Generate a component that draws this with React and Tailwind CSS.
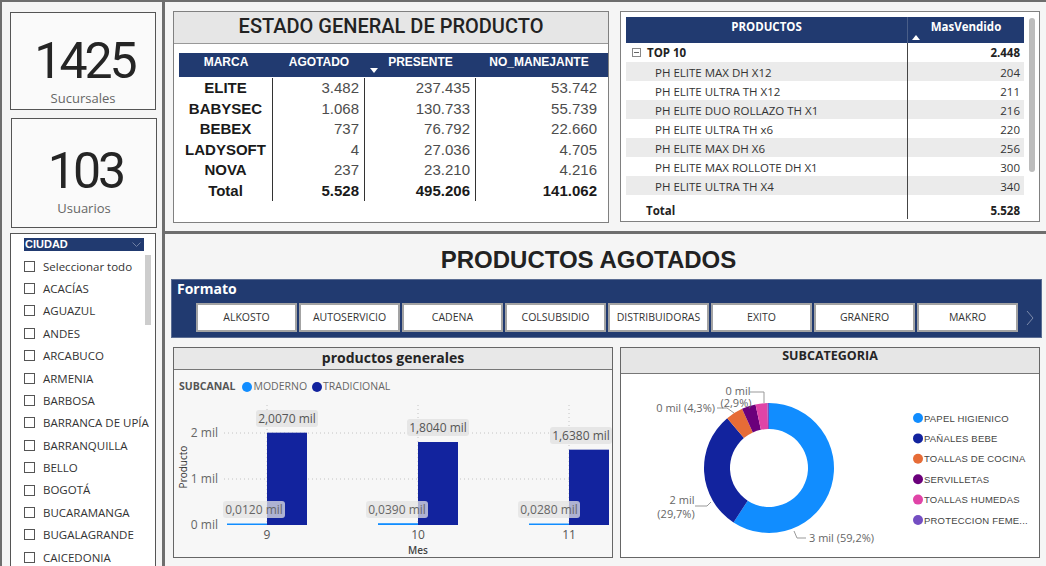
import React from "react";

const marcas = [
  ["ELITE", "3.482", "237.435", "53.742"],
  ["BABYSEC", "1.068", "130.733", "55.739"],
  ["BEBEX", "737", "76.792", "22.660"],
  ["LADYSOFT", "4", "27.036", "4.705"],
  ["NOVA", "237", "23.210", "4.216"],
];

const productos = [
  ["PH ELITE MAX DH X12", "204"],
  ["PH ELITE ULTRA TH X12", "211"],
  ["PH ELITE DUO ROLLAZO TH X1", "216"],
  ["PH ELITE ULTRA TH x6", "220"],
  ["PH ELITE MAX DH X6", "256"],
  ["PH ELITE MAX ROLLOTE DH X1", "300"],
  ["PH ELITE ULTRA TH X4", "340"],
  ["PH ELITE MAX DH X4", "347"],
];

const ciudades = [
  "Seleccionar todo",
  "ACACÍAS",
  "AGUAZUL",
  "ANDES",
  "ARCABUCO",
  "ARMENIA",
  "BARBOSA",
  "BARRANCA DE UPÍA",
  "BARRANQUILLA",
  "BELLO",
  "BOGOTÁ",
  "BUCARAMANGA",
  "BUGALAGRANDE",
  "CAICEDONIA",
];

const formatos = ["ALKOSTO", "AUTOSERVICIO", "CADENA", "COLSUBSIDIO", "DISTRIBUIDORAS", "EXITO", "GRANERO", "MAKRO"];

const subcategorias = [
  { name: "PAPEL HIGIENICO", color: "#118dff", from: 0, to: 213.1 },
  { name: "PAÑALES BEBE", color: "#12239e", from: 213.1, to: 320 },
  { name: "TOALLAS DE COCINA", color: "#e66c37", from: 320, to: 335.5 },
  { name: "SERVILLETAS", color: "#6b007b", from: 335.5, to: 348 },
  { name: "TOALLAS HUMEDAS", color: "#e044a7", from: 348, to: 358.6 },
  { name: "PROTECCION FEME...", color: "#744ec2", from: 358.6, to: 360 },
];

// donut slice path, angles clockwise from 12 o'clock
const arc = (cx, cy, r0, r1, a0, a1) => {
  const p = (r, a) => [cx + r * Math.sin((a * Math.PI) / 180), cy - r * Math.cos((a * Math.PI) / 180)];
  const large = a1 - a0 > 180 ? 1 : 0;
  const [x0, y0] = p(r1, a0);
  const [x1, y1] = p(r1, a1);
  const [x2, y2] = p(r0, a1);
  const [x3, y3] = p(r0, a0);
  return `M${x0} ${y0} A${r1} ${r1} 0 ${large} 1 ${x1} ${y1} L${x2} ${y2} A${r0} ${r0} 0 ${large} 0 ${x3} ${y3}Z`;
};

const KpiCard = ({ value, label, className }) => (
  <div className={`w-[146px] border border-[#555] bg-[#fafafa] flex flex-col items-center ${className}`}>
    <div className="font-['Roboto',sans-serif] text-[50px] leading-none tracking-[-3px] text-[#252525] mr-[-3px]">{value}</div>
    <div className="mt-[4px] text-[13px] leading-[16px] text-[#666]">{label}</div>
  </div>
);

const CiudadSlicer = () => (
  <div className="mt-[5px] w-[146px] flex-1 border border-b-0 border-[#555] bg-white relative overflow-hidden pl-[13px] pt-[4px]">
    <div className="w-[120px] h-[13px] bg-[#213a70] flex items-center justify-between pl-[1px] pr-[3px]">
      <span className="font-['Liberation_Sans',Arial,sans-serif] font-bold text-[11px] leading-[13px] text-white">CIUDAD</span>
      <svg width="9" height="6" viewBox="0 0 9 6">
        <path d="M0.5 0.5 L4.5 4.5 L8.5 0.5" fill="none" stroke="#6f7fa3" strokeWidth="1" />
      </svg>
    </div>
    <div className="mt-[4px]">
      {ciudades.map((c) => (
        <div key={c} className="h-[22.4px] flex items-center gap-[8px]">
          <div className="w-[11px] h-[11px] border border-[#555] bg-white shrink-0" />
          <span className="text-[11.5px] text-[#333] whitespace-nowrap">{c}</span>
        </div>
      ))}
    </div>
    <div className="absolute left-[134px] top-[21px] w-[6px] h-[70px] bg-[#cdcdcd]" />
  </div>
);

const EstadoCard = () => (
  <div className="w-[436px] h-[212px] border border-[#808080] bg-white flex flex-col">
    <div className="h-[32px] bg-[#e6e6e6] border-b border-[#999] flex items-center justify-center pb-[4px] font-['Roboto',sans-serif] font-medium text-[20px] text-[#222]">
      ESTADO GENERAL DE PRODUCTO
    </div>
    <div className="mt-[9px] ml-[5px] font-['Liberation_Sans',Arial,sans-serif]">
      <div className="flex h-[24px] bg-[#213a70] text-white font-bold text-[12px] leading-[14px]">
        <div className="w-[94px] text-center pt-[2px]">MARCA</div>
        <div className="w-[92px] text-center pt-[2px]">AGOTADO</div>
        <div className="w-[111px] text-center pt-[2px] relative">
          PRESENTE
          <svg className="absolute left-[5px] bottom-[4px]" width="8" height="5" viewBox="0 0 8 5">
            <path d="M0 0 L8 0 L4 5Z" fill="white" />
          </svg>
        </div>
        <div className="w-[126px] text-center pt-[2px]">NO_MANEJANTE</div>
      </div>
      <div className="flex mt-px text-[15px] leading-[20.5px]">
        <div className="w-[94px] border-r border-[#333] text-center font-bold text-[#1a1a1a]">
          {marcas.map((m) => (
            <div key={m[0]}>{m[0]}</div>
          ))}
          <div>Total</div>
        </div>
        {[1, 2, 3].map((i) => (
          <div
            key={i}
            className={`text-right pr-[5px] text-[#4d4d4d] ${i === 1 ? "w-[92px] border-r border-[#333]" : i === 2 ? "w-[111px] border-r border-[#333]" : "w-[126px]"}`}
          >
            {marcas.map((m) => (
              <div key={m[0]}>{m[i]}</div>
            ))}
            <div className="font-bold text-[#1a1a1a]">{i === 1 ? "5.528" : i === 2 ? "495.206" : "141.062"}</div>
          </div>
        ))}
      </div>
    </div>
  </div>
);

const ProductosCard = () => (
  <div className="w-[420px] h-[211px] border border-[#808080] bg-white relative pl-[5px] pt-[5px]">
    <div className="w-[398px] text-[11.5px]">
      <div className="flex h-[26px] bg-[#213a70] text-white font-bold leading-[14px]">
        <div className="w-[282px] text-center pt-[3px] border-r border-[#4a5e88]">PRODUCTOS</div>
        <div className="w-[116px] text-center pt-[3px] relative">
          MasVendido
          <svg className="absolute left-[4px] bottom-[3px]" width="8" height="5" viewBox="0 0 8 5">
            <path d="M0 5 L8 5 L4 0Z" fill="white" />
          </svg>
        </div>
      </div>
      <div className="h-[157px] overflow-hidden">
        <div className="flex h-[19px] items-center">
          <div className="w-[282px] h-full border-r border-[#444] flex items-center pl-[6px] font-bold text-[#222]">
            <div className="w-[9px] h-[9px] border border-[#888] flex items-center justify-center mr-[6px]">
              <div className="w-[5px] h-px bg-[#666]" />
            </div>
            TOP 10
          </div>
          <div className="w-[116px] text-right pr-[4px] font-bold text-[#222]">2.448</div>
        </div>
        {productos.map((p, i) => (
          <div key={p[0]} className={`flex h-[19px] items-center ${i % 2 === 0 ? "bg-[#ebebeb]" : "bg-white"}`}>
            <div className="w-[282px] h-full border-r border-[#444] flex items-center pl-[29px] text-[#333] leading-[12px] pt-[2px]">{p[0]}</div>
            <div className="w-[116px] text-right pr-[4px] text-[#333] leading-[12px] pt-[2px]">{p[1]}</div>
          </div>
        ))}
      </div>
      <div className="flex h-[19px] items-center font-bold text-[#222]">
        <div className="w-[282px] h-full border-r border-[#444] pl-[20px] flex items-center pt-[2px]">Total</div>
        <div className="w-[116px] text-right pr-[4px] pt-[2px]">5.528</div>
      </div>
    </div>
    <div className="absolute left-[408px] top-[6px] w-[6px] h-[154px] rounded-full bg-[#bcbcbc]" />
  </div>
);

const FormatoSlicer = () => (
  <div className="ml-[6px] w-[871px] h-[59px] bg-[#213a70] border border-[#5b6d93]">
    <div className="pl-[5px] text-white font-bold text-[14px] leading-[18px]">Formato</div>
    <div className="flex items-center mt-[5px] ml-[24px]">
      <div className="flex gap-[2px]">
        {formatos.map((f) => (
          <div
            key={f}
            className="w-[101px] h-[29px] bg-white border-2 border-[#a3a3a3] flex items-center justify-center pt-px text-[10.5px] text-[#333]"
          >
            {f}
          </div>
        ))}
      </div>
      <svg className="ml-[8px]" width="8" height="16" viewBox="0 0 8 16">
        <path d="M1 1 L7 8 L1 15" fill="none" stroke="#7d8bab" strokeWidth="1" />
      </svg>
    </div>
  </div>
);

const BarChart = () => {
  const grupos = [
    { mes: "9", x: 93, mod: 12, tra: 2007, lt: "2,0070 mil", lm: "0,0120 mil", ltx: 113, lty: 25, lmx: 80 },
    { mes: "10", x: 244, mod: 39, tra: 1804, lt: "1,8040 mil", lm: "0,0390 mil", ltx: 264, lty: 34, lmx: 223 },
    { mes: "11", x: 395, mod: 28, tra: 1638, lt: "1,6380 mil", lm: "0,0280 mil", ltx: 407, lty: 42, lmx: 375 },
  ];
  const base = 131;
  const k = 0.046;
  return (
    <div className="w-[440px] h-[211px] border border-[#666] bg-[#f7f7f7] flex flex-col">
      <div className="h-[22px] bg-[#e8e8e8] border-b border-[#777] text-center font-bold text-[14px] leading-[20px] text-[#252525]">
        productos generales
      </div>
      <div className="mt-[10px] h-[14px] flex items-center pl-[5px] text-[10.5px] text-[#666]">
        <span className="font-bold text-[#555] mr-[7px]">SUBCANAL</span>
        <span className="w-[10px] h-[10px] rounded-full bg-[#118dff] mr-px" />
        <span className="mr-[5px]">MODERNO</span>
        <span className="w-[10px] h-[10px] rounded-full bg-[#12239e] mr-px" />
        <span>TRADICIONAL</span>
      </div>
      <svg width="438" height="163" viewBox="0 0 438 163" fontFamily="Open Sans, sans-serif">
        {[39, 85].map((y) => (
          <line key={y} x1="50" x2="438" y1={y} y2={y} stroke="#c4c4c4" strokeDasharray="1 3" />
        ))}
        {grupos.map((g) => (
          <line key={g.mes} x1={g.x} x2={g.x} y1="11" y2={base} stroke="#c4c4c4" strokeDasharray="1 3" />
        ))}
        {[
          ["2 mil", 39],
          ["1 mil", 85],
          ["0 mil", 131],
        ].map(([t, y]) => (
          <text key={t} x="44" y={y + 4} textAnchor="end" fontSize="12" fill="#666">
            {t}
          </text>
        ))}
        <text transform="translate(13 73) rotate(-90)" textAnchor="middle" fontSize="10" fill="#333">
          Producto
        </text>
        {grupos.map((g) => (
          <g key={g.mes}>
            <rect x={g.x - 40} y={base - Math.max(g.mod * k, 1.5)} width="40" height={Math.max(g.mod * k, 1.5)} fill="#118dff" />
            <rect x={g.x} y={base - g.tra * k} width="40" height={g.tra * k} fill="#12239e" />
            <rect x={g.ltx - 31} y={g.lty - 9} width="62" height="17" rx="3" fill="#e3e3e3" fillOpacity="0.9" />
            <text x={g.ltx} y={g.lty + 4} textAnchor="middle" fontSize="12" fill="#555">
              {g.lt}
            </text>
            <rect x={g.lmx - 31} y="107" width="62" height="17" rx="3" fill="#e3e3e3" fillOpacity="0.75" />
            <text x={g.lmx} y="120" textAnchor="middle" fontSize="12" fill="#666">
              {g.lm}
            </text>
            <text x={g.x} y="145" textAnchor="middle" fontSize="12" fill="#555">
              {g.mes}
            </text>
          </g>
        ))}
        <text x="244" y="160" textAnchor="middle" fontSize="10" fontWeight="600" fill="#444">
          Mes
        </text>
      </svg>
    </div>
  );
};

const DonutChart = () => (
  <div className="w-[420px] h-[211px] border border-[#666] bg-white flex flex-col">
    <div className="h-[26px] bg-[#e6e6e6] border-b border-[#777] text-center font-bold text-[12.5px] leading-[16px] text-[#252525]">
      SUBCATEGORIA
    </div>
    <svg width="418" height="183" viewBox="0 0 418 183" fontFamily="Open Sans, sans-serif">
      {subcategorias.map((s) => (
        <path key={s.name} d={arc(148, 94, 39, 65, s.from, s.to)} fill={s.color} />
      ))}
      <polyline points="129,18 143,18 143,29" fill="none" stroke="#999" />
      <polyline points="96,34 106,34 113,39" fill="none" stroke="#999" />
      <polyline points="74,132 86,132 90,128" fill="none" stroke="#999" />
      <polyline points="173,157 176,164 185,164" fill="none" stroke="#999" />
      <g fontSize="11" fill="#666">
        <text x="117" y="21" textAnchor="middle">0 mil</text>
        <text x="115" y="33" textAnchor="middle">(2,9%)</text>
        <text x="94" y="38" textAnchor="end">0 mil (4,3%)</text>
        <text x="61" y="130" textAnchor="middle">2 mil</text>
        <text x="55" y="144" textAnchor="middle">(29,7%)</text>
        <text x="188" y="168">3 mil (59,2%)</text>
      </g>
      {subcategorias.map((s, i) => (
        <g key={s.name}>
          <circle cx="297" cy={44 + i * 20.4} r="5" fill={s.color} />
          <text x="303" y={44 + i * 20.4 + 3.5} fontSize="9.5" fill="#444" fontFamily="Liberation Sans, Arial, sans-serif" letterSpacing="0.2">
            {s.name}
          </text>
        </g>
      ))}
    </svg>
  </div>
);

export default function App() {
  return (
    <div className="w-[1046px] h-[566px] overflow-hidden bg-[#f5f5f5] flex border-t-2 border-l-2 border-[#6e6e6e] font-['Open_Sans',sans-serif]">
      {/* left column */}
      <div className="w-[160px] shrink-0 flex flex-col pl-[8px]">
        <KpiCard value="1425" label="Sucursales" className="mt-[10px] h-[98px] pt-[23px]" />
        <KpiCard value="103" label="Usuarios" className="mt-[8px] ml-px w-[145px] h-[110px] pt-[27px]" />
        <CiudadSlicer />
      </div>
      <div className="w-[3px] shrink-0 bg-[#6e6e6e]" />

      {/* right area */}
      <div className="flex-1 flex flex-col">
        <div className="h-[229px] shrink-0 flex pl-[8px] pt-[9px] gap-[11px]">
          <EstadoCard />
          <ProductosCard />
        </div>
        <div className="h-[3px] shrink-0 bg-[#6e6e6e]" />

        <div className="flex-1 flex flex-col">
          <div className="mt-[14px] h-[24px] leading-[24px] pr-[34px] text-center font-['Liberation_Sans',Arial,sans-serif] font-bold text-[24px] text-[#222]">
            PRODUCTOS AGOTADOS
          </div>
          <div className="mt-[7px]">
            <FormatoSlicer />
          </div>
          <div className="mt-[9px] pl-[8px] flex gap-[7px]">
            <BarChart />
            <DonutChart />
          </div>
        </div>
      </div>
    </div>
  );
}
